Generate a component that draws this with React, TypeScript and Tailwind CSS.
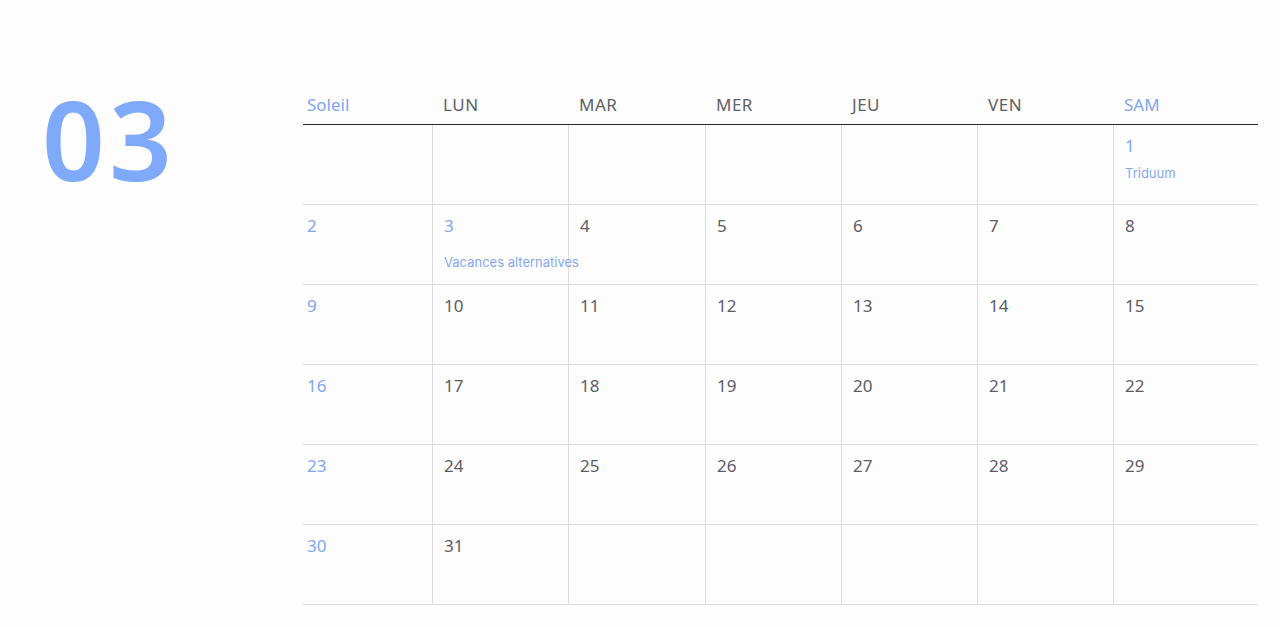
import React from 'react';

type Cell = { day?: number; note?: string };

const headers = ['Soleil', 'LUN', 'MAR', 'MER', 'JEU', 'VEN', 'SAM'];

// March: 1st falls on saturday
const buildWeeks = (): Cell[][] => {
  const cells: Cell[] = [];
  for (let i = 0; i < 6; i++) cells.push({});
  for (let d = 1; d <= 31; d++) cells.push({ day: d });
  while (cells.length < 42) cells.push({});
  cells[6].note = 'Triduum';
  cells[8].note = 'Vacances alternatives';
  const weeks: Cell[][] = [];
  for (let w = 0; w < 6; w++) weeks.push(cells.slice(w * 7, w * 7 + 7));
  return weeks;
};

const numFont = { fontFamily: '"Noto Sans", "Open Sans", sans-serif' };

const App: React.FC = () => {
  const weeks = buildWeeks();

  return (
    <div className="w-[1280px] h-[627px] bg-[#fefdfe] flex overflow-hidden" style={numFont}>
      {/* Month number */}
      <div className="w-[303px] shrink-0 pl-[42px] pt-[83px]">
        <div className="text-[110px] leading-none font-semibold text-[#7eaaf9] tracking-[4px]">03</div>
      </div>

      {/* Calendar */}
      <div className="pt-[92px]">
        <div className="grid grid-cols-[129px_136px_137px_136px_136px_136px_145px] border-b border-[#222]">
          {headers.map((h, i) => (
            <div
              key={h}
              className={`h-[32px] text-[17px] leading-[26px] ${i === 0 ? 'pl-[4px]' : 'pl-[11px]'} ${
                i === 0 || i === 6 ? 'text-[#7fa6ee]' : 'text-[#5f5f66] tracking-[0.5px]'
              }`}
            >
              {h}
            </div>
          ))}
        </div>

        {weeks.map((week, wi) => (
          <div
            key={wi}
            className="grid grid-cols-[129px_136px_137px_136px_136px_136px_145px] border-b border-[#e0dbe3]"
          >
            {week.map((c, ci) => (
              <div
                key={ci}
                className={`h-[79px] relative pt-[11px] ${ci === 0 ? 'pl-[4px]' : 'pl-[11px] border-l border-[#e0dbe3]'}`}
              >
                {c.day && (
                  <div
                    className={`text-[17px] leading-[20px] ${
                      ci === 0 || (wi === 0 && ci === 6) || c.note ? 'text-[#7fa6ee]' : 'text-[#5c5c62]'
                    }`}
                  >
                    {c.day}
                  </div>
                )}
                {c.note && (
                  <div
                    className={`absolute whitespace-nowrap text-[13px] text-[#86a7ee] z-10 ${
                      c.note === 'Triduum' ? 'top-[39px] left-[11px]' : 'top-[48px] left-[11px]'
                    }`}
                    style={{ fontFamily: 'Inter, "Liberation Sans", sans-serif' }}
                  >
                    {c.note}
                  </div>
                )}
              </div>
            ))}
          </div>
        ))}
      </div>
    </div>
  );
};

export default App;
